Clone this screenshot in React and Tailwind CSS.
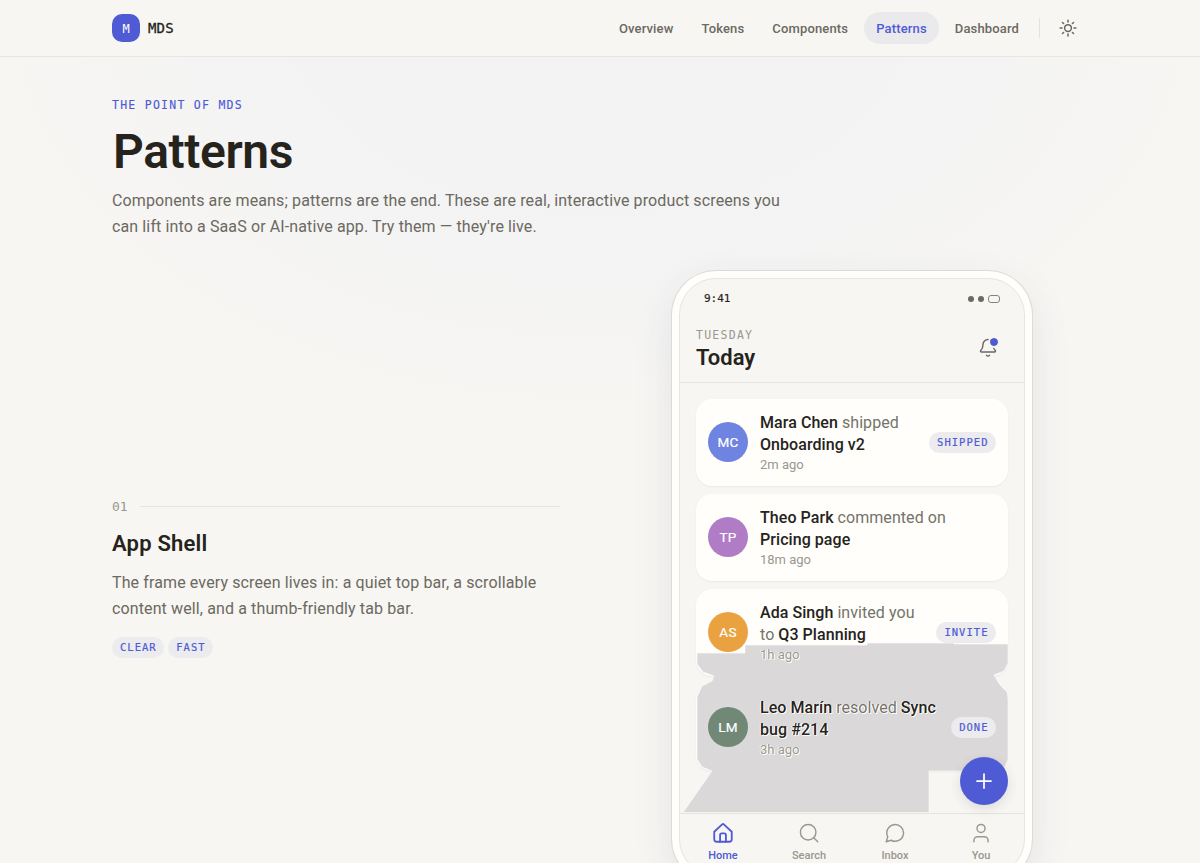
import React from 'react'

const navItems = ['Overview', 'Tokens', 'Components', 'Patterns', 'Dashboard']

// each line is a list of [text, strong] parts
const activity = [
  { initials: 'MC', color: 'bg-[#6f83e0]', lines: [[['Mara Chen', true], ['shipped']], [['Onboarding v2', true]]], time: '2m ago', tag: 'SHIPPED' },
  { initials: 'TP', color: 'bg-[#b07cc6]', lines: [[['Theo Park', true], ['commented on']], [['Pricing page', true]]], time: '18m ago' },
  { initials: 'AS', color: 'bg-[#e9a23f]', lines: [[['Ada Singh', true], ['invited you']], [['to'], ['Q3 Planning', true]]], time: '1h ago', tag: 'INVITE' },
  { initials: 'LM', color: 'bg-[#718877]', lines: [[['Leo Marín', true], ['resolved'], ['Sync', true]], [['bug #214', true]]], time: '3h ago', tag: 'DONE' }
]

const Icon = ({ children, size = 20, strokeWidth = 1.75 }) => (
  <svg
    width={size}
    height={size}
    viewBox="0 0 24 24"
    fill="none"
    stroke="currentColor"
    strokeWidth={strokeWidth}
    strokeLinecap="round"
    strokeLinejoin="round"
  >
    {children}
  </svg>
)

const tabs = [
  {
    label: 'Home',
    icon: (
      <>
        <path d="M8.500 22.500v-8a2 2 0 0 1 2-2h3a2 2 0 0 1 2 2v8" />
        <path d="M1.500 10.500L11 1.700a1.500 1.500 0 0 1 2 0L22.500 10.500V19.500a3 3 0 0 1-3 3H4.500a3 3 0 0 1-3-3Z" />
      </>
    )
  },
  {
    label: 'Search',
    icon: (
      <>
        <circle cx="11" cy="11" r="9.3" />
        <path d="m22.500 22.500-4.800-4.800" />
      </>
    )
  },
  { label: 'Inbox', icon: <path d="M7.400 20.700A10 10 0 1 0 3.300 16.500L1.500 22.500Z" /> },
  {
    label: 'You',
    icon: (
      <>
        <circle cx="12" cy="6.500" r="4.800" />
        <path d="M20.500 22.500v-1.500a4.500 4.500 0 0 0-4.500-4.500H8A4.500 4.500 0 0 0 3.500 21v1.500" />
      </>
    )
  }
]

const Badge = ({ children }) => (
  <span className="relative z-20 inline-flex h-[21px] shrink-0 items-center rounded-full bg-[#ececef] pl-2 pr-[7.5px] pt-px font-['DejaVu_Sans_Mono',monospace] text-[10.5px] tracking-[1.02px] text-[#4f5bd5] [-webkit-text-stroke:0.2px_#4f5bd5]">
    {children}
  </span>
)

const Header = () => (
  <header className="h-[57px] border-b border-[#e6e5e2] bg-[#f7f6f3]/80">
    <div className="mx-auto flex h-14 w-[976px] items-center justify-between">
      <div className="flex items-center gap-2 font-['DejaVu_Sans_Mono',monospace]">
        <div className="flex size-7 items-center justify-center rounded-[10px] bg-[#4f5bd5] pt-px text-[12px] text-white">M</div>
        <span className="pt-px text-[14px] tracking-[0.15px] text-[#25231c] [-webkit-text-stroke:0.3px_#25231c]">MDS</span>
      </div>
      <div className="flex items-center">
        <nav className="flex gap-1">
          {navItems.map((item) => (
            <a
              key={item}
              className={`flex h-8 items-center rounded-full px-3 pt-px text-[13px] font-medium tracking-[0.15px] ${
                item === 'Patterns' ? 'bg-[#eae9ec] text-[#4f5bd5]' : 'text-[#6b6960]'
              }`}
            >
              {item}
            </a>
          ))}
        </nav>
        <div className="mx-2 h-5 w-px bg-[#e3e2df]" />
        <button className="flex size-10 items-center justify-center text-[#6b6960]">
          <Icon size={18} strokeWidth={2}>
            <circle cx="12" cy="12" r="4.5" />
            <path d="M12 1.500v2.500M12 20v2.500M4.600 4.600l1.500 1.500M17.900 17.900l1.500 1.500M1.500 12h2.500M20 12h2.500M6.100 17.900l-1.500 1.500M19.400 4.600l-1.500 1.500" />
          </Icon>
        </button>
      </div>
    </div>
  </header>
)

const ActivityCard = ({ item }) => (
  <div className="flex h-[87px] items-center gap-3 rounded-2xl bg-[#fffefb] p-3 shadow-[0_1px_2px_rgba(40,38,30,0.06)]">
    <div className={`relative z-20 mb-px flex size-10 shrink-0 items-center justify-center rounded-full pt-px text-[13.5px] tracking-[0.3px] text-white [-webkit-text-stroke:0.2px_white] ${item.color}`}>
      {item.initials}
    </div>
    <div className="relative z-20 min-w-0 flex-1 [text-shadow:0_0_1px_#fffefb,1px_1px_0_#fffefb,-1px_0_0_#fffefb]">
      {item.lines.map((line, i) => (
        <p key={i} className="relative top-px flex gap-1 text-[16px] leading-[22px] tracking-[0.06px] text-[#74736a]">
          {line.map(([text, strong]) => (
            <span key={text} className={strong ? 'font-medium text-[#25231c]' : ''}>
              {text}
            </span>
          ))}
        </p>
      ))}
      <p className="text-[13px] leading-[19px] text-[#9a988f]">{item.time}</p>
    </div>
    {item.tag && <Badge>{item.tag}</Badge>}
  </div>
)

const Phone = () => (
  <div className="h-[612px] w-[360px] rounded-[44px] bg-[#fffefb] p-[7px] shadow-[0_0_0_1px_#dddbd8,0_14px_40px_rgba(60,60,110,0.1)]">
    <div className="flex h-full flex-col overflow-hidden rounded-[37px] border border-[#e6e5e7] bg-[#f7f6f3]">
      <div className="flex h-10 items-center justify-between px-6">
        <span className="pt-px font-['DejaVu_Sans_Mono',monospace] text-[11px] text-[#25231c] [-webkit-text-stroke:0.2px_#25231c]">9:41</span>
        <div className="flex items-center gap-1">
          <span className="size-1.5 rounded-full bg-[#6b6960]" />
          <span className="size-1.5 rounded-full bg-[#6b6960]" />
          <span className="h-2 w-3 rounded-[3px] border border-[#85837b]" />
        </div>
      </div>

      <div className="flex h-16 items-start justify-between border-b border-[#e4e3e0] px-4 pt-2">
        <div>
          <p className="font-['DejaVu_Sans_Mono',monospace] text-[11.5px] leading-4 tracking-[1.26px] text-[#9a988f]">TUESDAY</p>
          <p className="mt-px text-[22px] font-semibold leading-7 text-[#25231c]">Today</p>
        </div>
        <div className="relative flex size-10 items-center justify-center text-[#6b6960]">
          <Icon>
            <path d="M10.3 22a2 2 0 0 0 3.4 0" />
            <path d="M3.3 16.3A1 1 0 0 0 4 18h16a1 1 0 0 0 .7-1.7C19.4 15 18 13.5 18 9A6 6 0 0 0 6 9c0 4.500-1.400 6-2.700 7.300" />
          </Icon>
          <span className="absolute right-[8px] top-[9px] size-3 rounded-full border-2 border-[#f7f6f3] bg-[#4f5bd5] bg-clip-padding" />
        </div>
      </div>

      <div className="relative flex h-[430px] flex-col gap-2 px-4 pt-4">
        {activity.map((item) => (
          <ActivityCard key={item.initials} item={item} />
        ))}
        <svg className="absolute inset-0 z-10" width="344" height="430" viewBox="0 0 344 430">
          <path
            d="M17 270H65V262H187V260H274V261H328V280L324 288L314 292L320 302L327 309L328 315V377L324 385L315 388H249V429.500H3L32 388L22 384L17 376V314L22 303L32 298L34 293L23 289L17 281Z"
            fill="#dad8d9"
            stroke="#fffefb"
            strokeWidth="0.6"
          />
        </svg>
        <button className="absolute bottom-2 right-4 z-30 flex size-12 items-center justify-center rounded-full bg-[#4f5bd5] text-white shadow-[0_4px_12px_rgba(40,38,30,0.12)]">
          <Icon size={24} strokeWidth={1.75}>
            <path d="M5 12h14M12 5v14" />
          </Icon>
        </button>
      </div>

      <div className="grid flex-1 grid-cols-4 border-t border-[#e4e3e0]">
        {tabs.map((tab, i) => (
          <div key={tab.label} className={`flex flex-col items-center gap-[5px] pt-[9px] ${i === 0 ? 'text-[#4f5bd5]' : 'text-[#9a988f]'}`}>
            <Icon strokeWidth={i === 0 ? 2.2 : 1.75}>{tab.icon}</Icon>
            <span className="text-[11px] font-medium leading-4">{tab.label}</span>
          </div>
        ))}
      </div>
    </div>
  </div>
)

const App = () => {
  return (
    <div className="h-[863px] overflow-hidden bg-[#f7f6f3] bg-[radial-gradient(ellipse_620px_420px_at_50%_0px,#f2f2f3_0%,#f3f3f4_50%,#f7f6f3_100%)] font-[Roboto,sans-serif]">
      <Header />
      <main className="mx-auto w-[976px]">
        <section className="h-[214px] pt-10">
          <p className="font-['DejaVu_Sans_Mono',monospace] text-[11.5px] leading-4 tracking-[1.26px] text-[#4f5bd5] [-webkit-text-stroke:0.15px_#4f5bd5]">THE POINT OF MDS</p>
          <h1 className="ml-px mt-[13px] text-[48px] font-semibold leading-[52px] tracking-[-0.4px] text-[#25231c]">Patterns</h1>
          <p className="mt-[10px] w-[680px] text-[16px] leading-[26px] tracking-[0.12px] text-[#6b6960]">
            Components are means; patterns are the end. These are real, interactive product screens you can lift into a SaaS or AI-native app. Try them — they're live.
          </p>
        </section>

        <section className="grid grid-cols-[448px_472px] items-center gap-14">
          <div>
            <div className="flex items-center gap-3">
              <span className="font-['DejaVu_Sans_Mono',monospace] text-[13px] leading-5 text-[#9a988f]">01</span>
              <div className="h-px flex-1 bg-[#e6e5e2]" />
            </div>
            <h2 className="mt-[11px] text-[22px] font-semibold leading-8 tracking-[0.2px] text-[#25231c]">App Shell</h2>
            <p className="mt-[10px] text-[16px] leading-[26px] tracking-[0.12px] text-[#6b6960]">
              The frame every screen lives in: a quiet top bar, a scrollable content well, and a thumb-friendly tab bar.
            </p>
            <div className="mt-[15px] flex gap-1">
              <Badge>CLEAR</Badge>
              <Badge>FAST</Badge>
            </div>
          </div>
          <div className="flex justify-center">
            <Phone />
          </div>
        </section>
      </main>
    </div>
  )
}

export default App
